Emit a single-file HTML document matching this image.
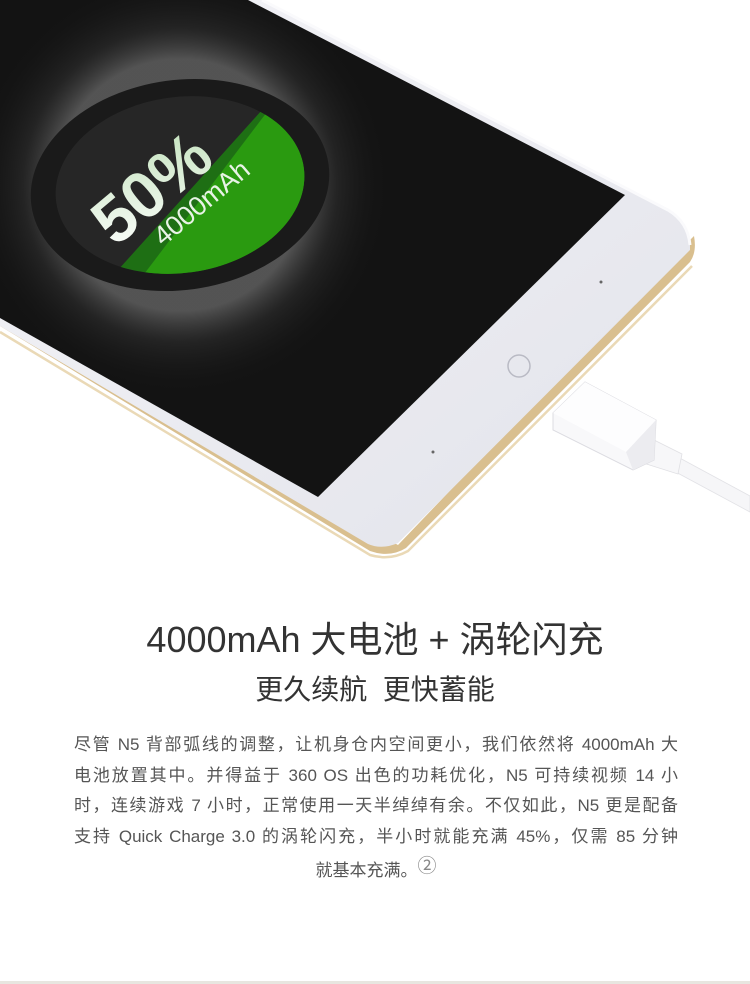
<!DOCTYPE html>
<html><head><meta charset="utf-8"><style>
body{margin:0;width:750px;height:984px;overflow:hidden;background:#fff;position:relative;font-family:"Liberation Sans","Noto Sans CJK SC",sans-serif}
svg{position:absolute;left:0;top:0}
.t{position:absolute;left:0;width:750px;text-align:center;color:#333}
.p{position:absolute;left:74px;width:604px;top:730px;font-size:17px;line-height:30.5px;color:#555}
.p div{text-align:justify;text-align-last:justify;height:30.5px;white-space:nowrap}
.p div.c{text-align:center;text-align-last:center}
.line{position:absolute;left:0;top:981px;width:750px;height:3px;background:#e8e6e0}
</style></head><body>
<svg width="750" height="580" viewBox="0 0 750 580">
<defs>
<radialGradient id="glow" cx="180" cy="185" r="210" gradientUnits="userSpaceOnUse">
<stop offset="0.6" stop-color="#888" stop-opacity="0.55"/><stop offset="0.75" stop-color="#555" stop-opacity="0.25"/><stop offset="1" stop-color="#141414" stop-opacity="0"/></radialGradient>
<linearGradient id="body" x1="0" y1="0" x2="1" y2="1"><stop offset="0" stop-color="#f4f4f8"/><stop offset="1" stop-color="#e2e3ea"/></linearGradient>
<linearGradient id="txt" x1="0" y1="1" x2="1" y2="0"><stop offset="0" stop-color="#ffffff"/><stop offset="1" stop-color="#bfe0b8"/></linearGradient>
<clipPath id="ci"><ellipse cx="180" cy="185" rx="125" ry="88" transform="rotate(-8 180 185)"/></clipPath>
<clipPath id="sc"><path d="M248 0 L625 195 L318 497 L0 318 L0 0 Z"/></clipPath>
</defs>
<path d="M0 326 L370 551 Q390 558 406 548 L690 262 Q697 252 694 236 L690 240 L398 545 L0 322 Z" fill="#d9bf8f"/>
<path d="M0 332 L370 555 Q390 561 408 551 L692 266" fill="none" stroke="#ead9b6" stroke-width="2.5"/>
<path d="M262 0 L668 210 Q688 222 690 245 L690 250 L398 543 Q382 550 368 544 L0 326 L0 0 Z" fill="url(#body)"/>
<path d="M262 0 L668 210 Q688 222 690 245" fill="none" stroke="#fafafc" stroke-width="3"/>
<path d="M248 0 L625 195 L318 497 L0 318 L0 0 Z" fill="#131313"/>
<rect x="0" y="0" width="700" height="500" fill="url(#glow)" clip-path="url(#sc)"/>
<ellipse cx="180" cy="185" rx="150" ry="105" transform="rotate(-8 180 185)" fill="#1a1a1a"/>
<ellipse cx="180" cy="185" rx="125" ry="88" transform="rotate(-8 180 185)" fill="#262626"/>
<g clip-path="url(#ci)">
<path d="M100 290 L262 110 L340 150 L340 300 Z" fill="#1e6f14"/>
<path d="M132 290 L270 108 L340 150 L340 300 Z" fill="#2a9a10"/>
</g>
<g transform="rotate(-40 170 185)">
<text x="88" y="198" font-family="Liberation Sans" font-weight="bold" font-size="66" fill="url(#txt)">50%</text>
<text x="125" y="228" font-family="Liberation Sans" font-size="27" fill="#e8f3e6">4000mAh</text>
</g>
<circle cx="519" cy="366" r="11" fill="none" stroke="#b9bac4" stroke-width="1.5"/>
<circle cx="601" cy="282" r="1.5" fill="#666"/>
<circle cx="433" cy="452" r="1.5" fill="#666"/>
<path d="M676 456 L750 496 L750 512 L672 470 Z" fill="#f6f6f8" stroke="#e2e2e6" stroke-width="0.8"/>
<path d="M642 434 L682 454 L678 474 L640 462 Z" fill="#f7f7f9" stroke="#e0e0e4" stroke-width="0.8"/>
<path d="M553 413 L585 382 L656 420 L654 460 L633 470 L553 430 Z" fill="#f8f8fa" stroke="#dcdce1" stroke-width="1"/>
<path d="M553 413 L585 382 L656 420 L626 452 Z" fill="#fdfdfe"/>
<path d="M626 452 L656 420 L654 460 L633 470 Z" fill="#ececf0"/>
</svg>
<div class="t" style="top:616px;font-size:36px;line-height:48px">4000mAh 大电池 + 涡轮闪充</div>
<div class="t" style="top:670px;font-size:28px;line-height:40px">更久续航&nbsp;&nbsp;更快蓄能</div>
<div class="p">
<div>尽管 N5 背部弧线的调整，让机身仓内空间更小，我们依然将 4000mAh 大</div>
<div>电池放置其中。并得益于 360 OS 出色的功耗优化，N5 可持续视频 14 小</div>
<div>时，连续游戏 7 小时，正常使用一天半绰绰有余。不仅如此，N5 更是配备</div>
<div>支持 Quick Charge 3.0 的涡轮闪充，半小时就能充满 45%，仅需 85 分钟</div>
<div class="c">就基本充满。<span style="font-size:19px;vertical-align:4px;color:#888">②</span></div>
</div>
<div class="line"></div>
</body></html>
